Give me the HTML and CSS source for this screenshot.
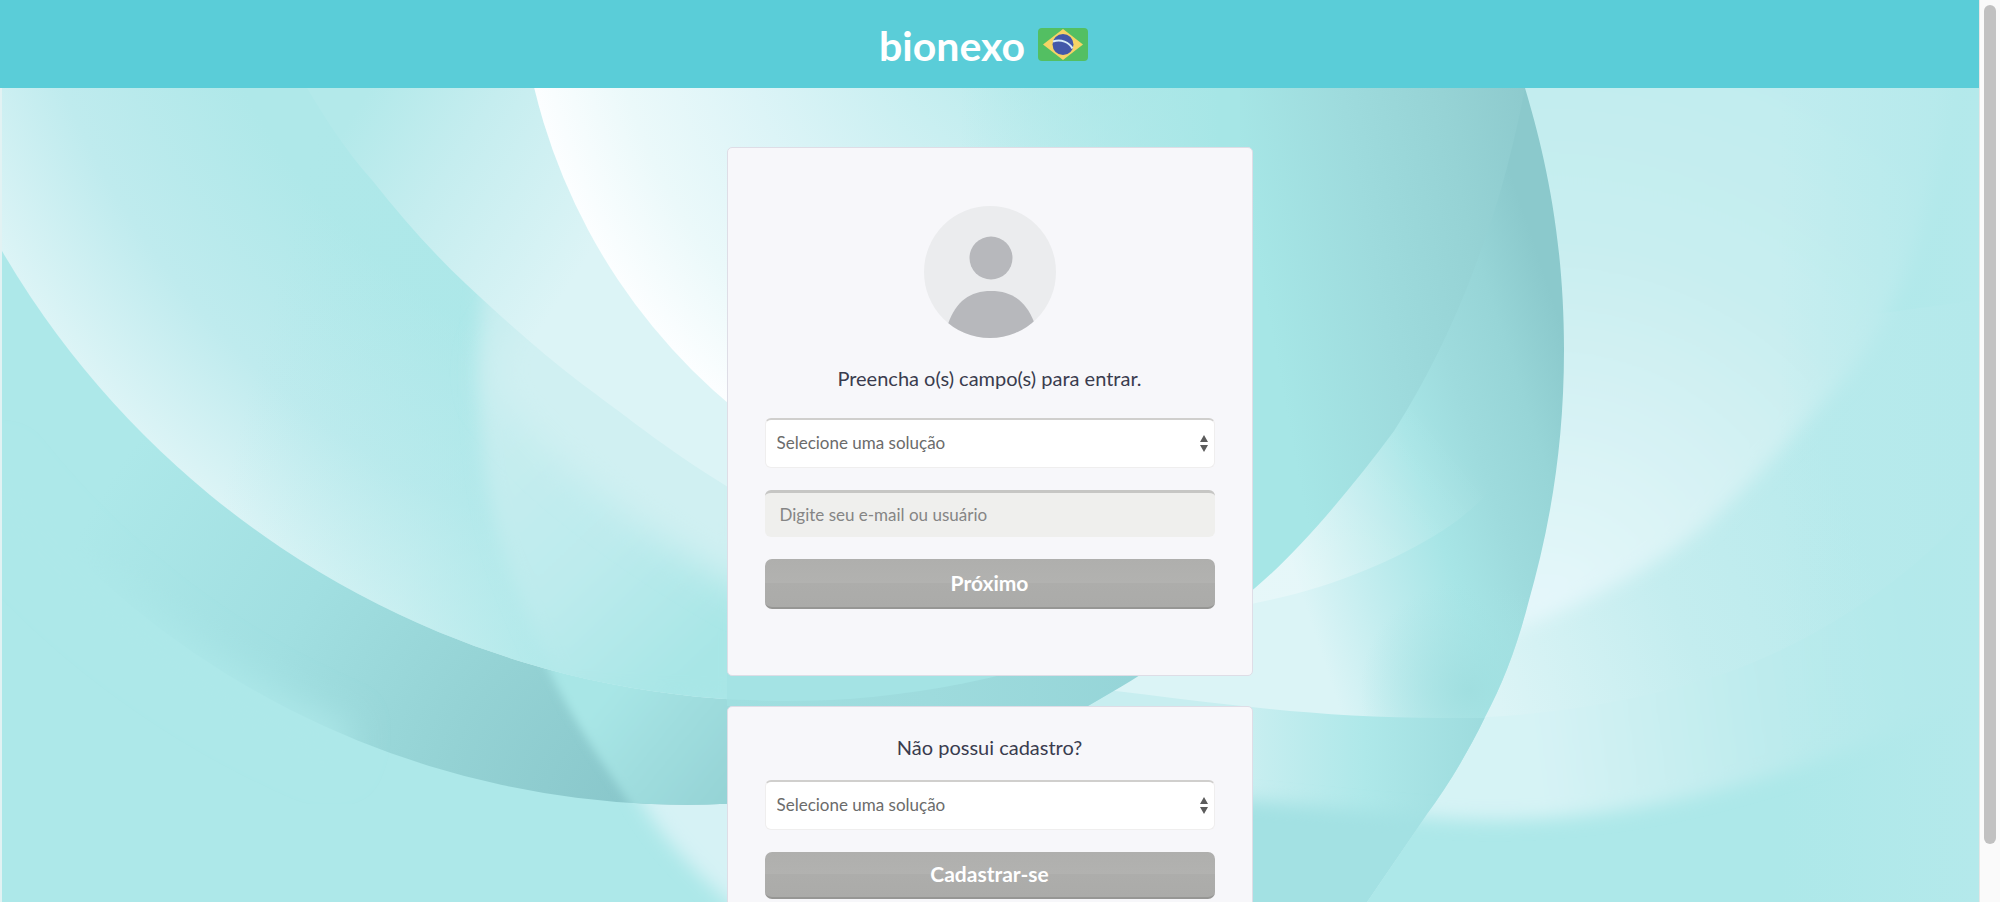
FILE: index.html
```html
<!DOCTYPE html>
<html lang="pt-BR">
<head>
<meta charset="utf-8">
<meta name="viewport" content="width=device-width, initial-scale=1">
<title>Bionexo</title>
<link rel="stylesheet" href="styles.css">
</head>
<body>
<div class="window">
  <div class="page">
    <header class="header">
      <span class="logo">bionexo</span>
      <svg class="flag" viewBox="0 0 50 33" role="img" aria-label="Brasil">
        <rect width="50" height="33" rx="4" fill="#53bf62"/>
        <path d="M25 1 45 16.500 25 32 5 16.500Z" fill="#f6d465"/>
        <circle cx="25" cy="16.500" r="10.500" fill="#4358a9"/>
        <path d="M15 13.500C23 11 31 14 34.500 20.500" fill="none" stroke="#d9ecf7" stroke-width="2"/>
      </svg>
    </header>
    <main class="content">
      <svg class="backdrop" viewBox="0 88 1979 814" preserveAspectRatio="xMidYMin slice" aria-hidden="true">
        <defs>
          <filter id="slight" x="-10%" y="-10%" width="120%" height="120%"><feGaussianBlur stdDeviation="5"/></filter>
          <filter id="soft" x="-10%" y="-10%" width="120%" height="120%"><feGaussianBlur stdDeviation="9"/></filter>
          <filter id="softer" x="-20%" y="-20%" width="140%" height="140%"><feGaussianBlur stdDeviation="18"/></filter>
          <clipPath id="leftHalf"><rect y="88" width="1240" height="814"/></clipPath>
          <clipPath id="inner"><circle cx="786" cy="-207" r="908"/></clipPath>
          <clipPath id="outer"><path d="M0 88V473A878 878 0 0 0 1088 708V88Z"/></clipPath>
          <clipPath id="ribbonClip"><path d="M1100 88H1525C1542 145 1564 230 1564 350C1564 450 1549 530 1528 604C1516 650 1502 685 1485 717C1465 758 1445 790 1427 814L1367 902H1000Z"/></clipPath>
          <linearGradient id="far" gradientUnits="userSpaceOnUse" x1="1440" y1="0" x2="1900" y2="-60"><stop stop-color="#d6f3f5"/><stop offset=".5" stop-color="#bdebed"/><stop offset="1" stop-color="#ade8e9"/></linearGradient>
          <linearGradient id="middle" gradientUnits="userSpaceOnUse" x1="1500" y1="710" x2="1870" y2="560"><stop stop-color="#dcf4f6"/><stop offset=".5" stop-color="#c4edef"/><stop offset="1" stop-color="#b8eaec"/></linearGradient>
          <radialGradient id="near" gradientUnits="userSpaceOnUse" cx="1545" cy="625" r="600"><stop stop-color="#e6f7fb"/><stop offset=".3" stop-color="#d9f3f5"/><stop offset=".65" stop-color="#c8eef0"/><stop offset="1" stop-color="#c0ecef"/></radialGradient>
          <linearGradient id="edgeFade" gradientUnits="userSpaceOnUse" x1="1780" y1="0" x2="1979" y2="0"><stop stop-color="#b4e9eb" stop-opacity="0"/><stop offset="1" stop-color="#b4e9eb"/></linearGradient>
          <linearGradient id="ribbon" gradientUnits="userSpaceOnUse" x1="1570" y1="350" x2="1255" y2="455"><stop stop-color="#8bc9cc"/><stop offset=".18" stop-color="#97d5d7"/><stop offset=".36" stop-color="#9edbdd"/><stop offset=".55" stop-color="#a7e5e6"/><stop offset=".8" stop-color="#c3edef"/><stop offset="1" stop-color="#dbf4f6"/></linearGradient>
          <linearGradient id="sheen" gradientUnits="userSpaceOnUse" x1="1300" y1="560" x2="1450" y2="440"><stop stop-color="#fff" stop-opacity=".3"/><stop offset="1" stop-color="#fff" stop-opacity="0"/></linearGradient>
          <radialGradient id="pool" gradientUnits="userSpaceOnUse" cx="1470" cy="690" r="110"><stop stop-color="#9fdedf" stop-opacity=".9"/><stop offset="1" stop-color="#a4e2e3" stop-opacity="0"/></radialGradient>
          <linearGradient id="ribbonLow" gradientUnits="userSpaceOnUse" x1="1250" y1="0" x2="1480" y2="0"><stop stop-color="#c8eef0"/><stop offset=".5" stop-color="#aee8e9"/><stop offset="1" stop-color="#9edcde"/></linearGradient>
          <linearGradient id="disc" gradientUnits="userSpaceOnUse" x1="1220" y1="60" x2="1540" y2="0"><stop stop-color="#a6e6e6"/><stop offset=".35" stop-color="#9edbdd"/><stop offset=".65" stop-color="#96d3d5"/><stop offset=".92" stop-color="#8dcacd"/></linearGradient>
          <radialGradient id="shade" gradientUnits="userSpaceOnUse" cx="640" cy="815" r="660"><stop stop-color="#88c6ca"/><stop offset=".3" stop-color="#94d2d4"/><stop offset=".6" stop-color="#a1dfe1"/><stop offset=".95" stop-color="#ade8e9"/></radialGradient>
          <linearGradient id="shadeRight" gradientUnits="userSpaceOnUse" x1="600" y1="700" x2="760" y2="830"><stop stop-color="#a8e6e6"/><stop offset="1" stop-color="#90ced1"/></linearGradient>
          <linearGradient id="gap" gradientUnits="userSpaceOnUse" x1="730" y1="0" x2="1130" y2="0"><stop stop-color="#a0dfe0"/><stop offset=".5" stop-color="#9edbdd"/><stop offset="1" stop-color="#96d5d8"/></linearGradient>
          <radialGradient id="crescent" gradientUnits="userSpaceOnUse" cx="786" cy="-207" r="908"><stop offset=".68" stop-color="#afe8e9"/><stop offset=".86" stop-color="#bfebee"/><stop offset="1" stop-color="#dcf4f6"/></radialGradient>
          <linearGradient id="crescentFade" gradientUnits="userSpaceOnUse" x1="220" y1="500" x2="610" y2="600"><stop stop-color="#aae7e8" stop-opacity="0"/><stop offset=".5" stop-color="#aae7e8" stop-opacity=".4"/><stop offset="1" stop-color="#aae7e8"/></linearGradient>
          <linearGradient id="diagonal" gradientUnits="userSpaceOnUse" x1="490" y1="440" x2="700" y2="660"><stop stop-color="#c6edef"/><stop offset=".5" stop-color="#bdebed"/><stop offset="1" stop-color="#a8e6e6"/></linearGradient>
          <linearGradient id="veil" gradientUnits="userSpaceOnUse" x1="330" y1="150" x2="560" y2="300"><stop stop-color="#b3e9ea"/><stop offset=".4" stop-color="#c5edef"/><stop offset="1" stop-color="#dcf4f6"/></linearGradient>
          <radialGradient id="glow" gradientUnits="userSpaceOnUse" cx="1112" cy="-50" r="594"><stop offset=".2" stop-color="#b6eaeb"/><stop offset=".65" stop-color="#dcf4f7"/><stop offset=".85" stop-color="#ebf9fa"/><stop offset="1" stop-color="#fcfeff"/></radialGradient>
          <linearGradient id="glowFade" gradientUnits="userSpaceOnUse" x1="960" y1="0" x2="1220" y2="0"><stop stop-color="#a6e6e6" stop-opacity="0"/><stop offset="1" stop-color="#a6e6e6"/></linearGradient>
        </defs>
        <rect y="88" width="1979" height="814" fill="#ade8e9"/>
        <path filter="url(#soft)" fill="url(#far)" d="M1240 500V798C1350 808 1430 822 1510 820C1680 815 1800 770 1979 700V300Z"/>
        <path fill="url(#middle)" d="M1240 400V701C1310 710 1370 718 1442 718C1540 718 1640 702 1729 672C1830 635 1920 570 1979 500V300Z"/>
        <path filter="url(#soft)" fill="url(#near)" d="M1450 0V650C1500 638 1555 616 1609 588C1650 568 1680 546 1705 526C1745 490 1780 452 1849 374C1900 310 1940 220 1965 0Z"/>
        <rect x="1780" y="88" width="199" height="814" fill="url(#edgeFade)"/>
        <g clip-path="url(#ribbonClip)">
          <rect x="1000" y="88" width="600" height="814" fill="url(#ribbon)"/>
          <path fill="url(#sheen)" d="M1200 300V612C1300 600 1380 570 1442 531C1490 500 1520 460 1540 400Z"/>
          <rect x="1340" y="570" width="240" height="240" fill="url(#pool)"/>
          <path fill="url(#ribbonLow)" d="M1000 680C1150 690 1270 718 1442 718H1600V902H1000Z"/>
          <path filter="url(#soft)" fill="#a3e1e3" d="M1000 780C1200 790 1320 812 1500 820V940H1000Z"/>
        </g>
        <path filter="url(#soft)" fill="#d6f2f5" d="M630 780C650 825 690 870 750 920H1100V780Z"/>
        <path fill="url(#disc)" d="M1000 88H1525C1515 140 1500 200 1480 253C1460 310 1430 375 1394 431C1350 490 1300 550 1255 588C1205 630 1150 670 1088 706H1000Z"/>
        <g clip-path="url(#outer)">
          <rect y="88" width="1090" height="740" fill="url(#shade)"/>
          <path filter="url(#slight)" fill="url(#shadeRight)" d="M535 640C565 710 600 760 648 830H820V640Z"/>
        </g>
        <path fill="url(#gap)" d="M727 650V706H1088C1120 688 1145 672 1172 655V650Z"/>
        <path filter="url(#softer)" fill="none" stroke="#ade8e9" stroke-width="44" d="M-20 470A878 878 0 0 0 345 748"/>
        <g clip-path="url(#leftHalf)">
          <g clip-path="url(#inner)">
            <rect y="88" width="727" height="614" fill="url(#crescent)"/>
            <rect y="88" width="727" height="614" fill="url(#crescentFade)"/>
            <path filter="url(#soft)" fill="url(#diagonal)" d="M500 200C470 320 475 440 495 526C505 570 530 625 560 690L740 700V200Z"/>
            <path filter="url(#softer)" fill="#d0f0f2" d="M530 300C495 340 485 370 495 390C530 440 580 480 620 510C660 540 700 565 760 600V300Z"/>
            <path fill="url(#veil)" d="M307 88C325 118 345 150 372 180C402 218 432 252 466 284C500 316 540 352 582 384C630 419 675 456 740 494H900V88Z"/>
            <circle cx="1112" cy="-50" r="594" fill="url(#glow)"/>
            <path fill="#a4e3e4" d="M727 600H1000V720H727Z"/>
          </g>
        </g>
        <rect x="960" y="88" width="280" height="70" fill="url(#glowFade)"/>
        <rect y="88" width="2" height="814" fill="#e2f2f3"/>
      </svg>

      <form class="card card-login">
        <svg class="avatar" viewBox="0 0 132 132" aria-hidden="true">
          <clipPath id="face"><circle cx="66" cy="66" r="66"/></clipPath>
          <g clip-path="url(#face)">
            <rect width="132" height="132" fill="#ebecee"/>
            <circle cx="67" cy="52" r="21.500" fill="#b7b8bc"/>
            <path d="M24 118C32 95 46 85 67 85S102 95 110 116V132H24Z" fill="#b7b8bc"/>
          </g>
        </svg>
        <h1 class="title">Preencha o(s) campo(s) para entrar.</h1>
        <div class="select-box">
          <select class="select" aria-label="Solução"><option>Selecione uma solução</option></select>
          <svg class="arrows" viewBox="0 0 8 17" aria-hidden="true"><path d="M4 0 8 7H0ZM0 10H8L4 17Z"/></svg>
        </div>
        <input class="input" type="text" placeholder="Digite seu e-mail ou usuário" aria-label="E-mail ou usuário">
        <button class="button" type="button">Próximo</button>
      </form>

      <form class="card card-signup">
        <h2 class="title">Não possui cadastro?</h2>
        <div class="select-box">
          <select class="select" aria-label="Solução para cadastro"><option>Selecione uma solução</option></select>
          <svg class="arrows" viewBox="0 0 8 17" aria-hidden="true"><path d="M4 0 8 7H0ZM0 10H8L4 17Z"/></svg>
        </div>
        <button class="button button-short" type="button">Cadastrar-se</button>
      </form>
    </main>
  </div>
  <div class="scrollbar" aria-hidden="true"><div class="thumb"></div></div>
</div>
</body>
</html>
```

FILE: styles.css
```css
* { box-sizing: border-box; }

body {
  margin: 0;
  font-family: Lato, "Liberation Sans", sans-serif;
}

.window {
  display: flex;
  height: 100vh;
  overflow: hidden;
}

.page {
  flex: 1;
  display: flex;
  flex-direction: column;
  overflow: hidden;
}

.header {
  flex: none;
  display: flex;
  align-items: center;
  justify-content: center;
  gap: 13px;
  height: 88px;
  padding: 0 12px 0 0;
  background: #5acdd8;
}

.logo {
  padding-top: 4px;
  color: #fff;
  font-size: 41px;
  font-weight: 700;
  line-height: 48px;
}

.flag { width: 50px; height: 33px; }

.content {
  position: relative;
  flex: 1;
  display: flex;
  flex-direction: column;
  align-items: center;
  gap: 30px;
  min-height: 0;
  padding: 59px 16px 0;
}

.backdrop {
  position: absolute;
  inset: 0;
  width: 100%;
  height: 100%;
}

.card {
  position: relative;
  flex: none;
  display: flex;
  flex-direction: column;
  width: 100%;
  max-width: 526px;
  padding: 0 37px;
  background: #f7f7fa;
  border: 1px solid #dedde6;
  border-radius: 5px;
}

.card-login { padding-top: 58px; padding-bottom: 66px; }
.card-signup { padding-top: 25px; padding-bottom: 40px; }

.avatar {
  align-self: center;
  width: 132px;
  height: 132px;
  margin-bottom: 25px;
}

.title {
  margin: 0 0 25px;
  color: #3a3c4e;
  font-size: 20px;
  font-weight: 400;
  line-height: 30px;
  text-align: center;
}

.card-signup .title { margin-bottom: 18px; }

.select-box {
  position: relative;
  margin-bottom: 22px;
}

.select,
.input {
  display: block;
  width: 100%;
  font-family: inherit;
  font-size: 17px;
  border-radius: 6px;
  outline: 0;
}

.select {
  height: 50px;
  padding: 0 11px 2px;
  appearance: none;
  color: #6b6b6b;
  background: #fff;
  border: 1px solid #efeeee;
  border-top: 2px solid #d0cfcd;
}

.arrows {
  position: absolute;
  top: 17px;
  right: 7px;
  width: 8px;
  height: 17px;
  fill: #5c5c5c;
  pointer-events: none;
}

.input {
  height: 47px;
  margin-bottom: 22px;
  padding: 0 15px 2px;
  color: #6b6b6b;
  background: #efefed;
  border: 0;
  border-top: 3px solid #c6c6c4;
}

.input::placeholder { color: #858585; opacity: 1; }

.button {
  height: 50px;
  padding-bottom: 3px;
  color: #fff;
  font-family: inherit;
  font-size: 21px;
  font-weight: 700;
  background: linear-gradient(#afafad, #b2b2b0 50%, #adadab 50%, #ababa9);
  border: 0;
  border-bottom: 2px solid #969694;
  border-radius: 7px;
}

.button-short { height: 47px; }

.scrollbar {
  flex: none;
  width: 21px;
  padding: 5px 4px 58px;
  background: #fafafa;
  border-left: 1px solid #e6e6e6;
}

.thumb {
  width: 12px;
  height: 100%;
  background: #c1c1c1;
  border-radius: 6px;
}
```
